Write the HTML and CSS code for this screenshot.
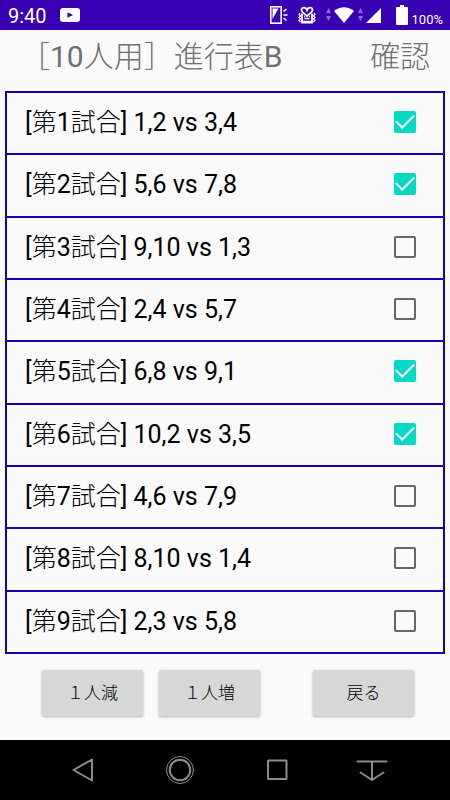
FILE: index.html
```html
<!DOCTYPE html>
<html lang="ja">
    <head>
        <meta charset="UTF-8" />
        <title>進行表B</title>
        <meta name="viewport" content="width=device-width, initial-scale=1.0" />
        <link rel="stylesheet" href="styles.css">
    </head>
    <body>
        <div class="status-bar">
            <span class="clock">9:40</span>
            <svg class="video-icon" width="20" height="14" viewBox="0 0 20 14">
                <rect width="20" height="14" rx="3" fill="#fff" />
                <path d="M7.5 4.2v5.6L13 7z" fill="#3700b3" />
            </svg>
            <div class="status-icons">
                <svg width="18" height="20" viewBox="0 0 18 20">
                    <rect x="0.8" y="1.8" width="10.4" height="16.4" fill="none" stroke="#fff" stroke-width="1.6" />
                    <path d="M2.5 3.500h6L2.500 14z" fill="#fff" />
                    <path d="M13.500 6.500l3-2.500M13.500 10h4M13.500 13l3 2.500" stroke="#fff" stroke-width="1.5" />
                </svg>
                <svg class="mascot" width="18" height="20" viewBox="0 0 18 20" fill="none" stroke="#fff">
                    <path d="M9 5C8 2 3.500 1.500 3.500 5c0 2.500 3 3.500 5.500 6 2.500-2.500 5.500-3.500 5.500-6C14.500 1.500 10 2 9 5z" stroke-width="1.8" />
                    <path d="M4 8.500V17.500h10V8.500" stroke-width="1.8" />
                    <path d="M5 16.500h8M6.500 13.500h5M6 11.500h1M11 11.500h1" stroke-width="1.3" />
                    <path d="M2 8l-1 1.500L2.500 11 1 12.500 2.500 14 1 15.500 2.500 17M16 8l1 1.500-1.500 1.500 1.500 1.500-1.500 1.500 1.500 1.500-1.500 1.500" stroke-width="1.2" />
                </svg>
                <svg width="5" height="14" viewBox="0 0 5 14" fill="#8c6bd4">
                    <path d="M2.500 0 5 5H0zM2.500 13 5 8H0z" />
                </svg>
                <svg class="wifi" width="20" height="16" viewBox="0 0 20 16">
                    <path d="M0 4Q10-3.500 20 4L10 16z" fill="#fff" />
                </svg>
                <svg width="5" height="14" viewBox="0 0 5 14" fill="#8c6bd4">
                    <path d="M2.500 0 5 5H0zM2.500 13 5 8H0z" />
                </svg>
                <svg class="signal" width="15" height="15" viewBox="0 0 15 15">
                    <path d="M15 0v15H0z" fill="#fff" />
                </svg>
                <svg class="battery" width="12" height="20" viewBox="0 0 12 20">
                    <path d="M4 0h4v2h3q1 0 1 1v16q0 1-1 1H1q-1 0-1-1V3q0-1 1-1h3z" fill="#fff" />
                </svg>
                <span class="battery-level">100%</span>
            </div>
        </div>

        <header class="header">
            <h1>［10人用］進行表B</h1>
            <span>確認</span>
        </header>

        <ul class="matches">
            <li><label for="match-1">[第1試合] 1,2 vs 3,4</label><input type="checkbox" id="match-1" checked /></li>
            <li><label for="match-2">[第2試合] 5,6 vs 7,8</label><input type="checkbox" id="match-2" checked /></li>
            <li><label for="match-3">[第3試合] 9,10 vs 1,3</label><input type="checkbox" id="match-3" /></li>
            <li><label for="match-4">[第4試合] 2,4 vs 5,7</label><input type="checkbox" id="match-4" /></li>
            <li><label for="match-5">[第5試合] 6,8 vs 9,1</label><input type="checkbox" id="match-5" checked /></li>
            <li><label for="match-6">[第6試合] 10,2 vs 3,5</label><input type="checkbox" id="match-6" checked /></li>
            <li><label for="match-7">[第7試合] 4,6 vs 7,9</label><input type="checkbox" id="match-7" /></li>
            <li><label for="match-8">[第8試合] 8,10 vs 1,4</label><input type="checkbox" id="match-8" /></li>
            <li><label for="match-9">[第9試合] 2,3 vs 5,8</label><input type="checkbox" id="match-9" /></li>
        </ul>

        <div class="actions">
            <button class="btn" type="button">１人減</button>
            <button class="btn" type="button">１人増</button>
            <button class="btn btn-back" type="button">戻る</button>
        </div>

        <nav class="nav-bar">
            <button type="button" aria-label="戻る">
                <svg width="32" height="32" viewBox="0 0 32 32">
                    <path d="M25 5.500v21L6.500 16z" />
                </svg>
            </button>
            <button type="button" aria-label="ホーム">
                <svg width="32" height="32" viewBox="0 0 32 32">
                    <circle cx="17" cy="16" r="10.200" />
                    <circle cx="17" cy="16" r="13.500" stroke-width="1" />
                </svg>
            </button>
            <button type="button" aria-label="履歴">
                <svg width="32" height="32" viewBox="0 0 32 32">
                    <rect x="8" y="6.500" width="18.500" height="18.500" rx="0.500" />
                </svg>
            </button>
            <button type="button" aria-label="隠す">
                <svg width="32" height="32" viewBox="0 0 32 32">
                    <path d="M1.500 7.500h29M16 7.500V26M4.500 18.500l11.500 7.500 11.500-7.500" />
                </svg>
            </button>
        </nav>
    </body>
</html>
```

FILE: styles.css
```css
* {
    margin: 0;
    padding: 0;
    box-sizing: border-box;
}

body {
    font-family: Roboto, "Noto Sans CJK JP Light", "Noto Sans CJK JP", sans-serif;
    background: #fafafa;
    color: #000;
    min-height: 100vh;
    display: flex;
    flex-direction: column;
}

button,
input {
    font: inherit;
    color: inherit;
}

.status-bar {
    display: flex;
    align-items: center;
    height: 30px;
    padding: 0 7px 0 8px;
    background: #3700b3;
    color: #fff;
}

.clock {
    padding-top: 2px;
    font-size: 20px;
}

.video-icon {
    margin-left: 13px;
}

.status-icons {
    display: flex;
    align-items: center;
    margin-left: auto;
}

.mascot {
    margin: 0 10px;
}

.wifi {
    margin: 0 4px 0 3px;
}

.signal {
    margin: 0 15px 0 3px;
}

.battery-level {
    margin-left: 4px;
    padding-top: 8px;
    font-size: 13px;
}

.header {
    display: flex;
    justify-content: space-between;
    align-items: center;
    padding: 5px 20px 12px;
    color: #707070;
    font-size: 30px;
    line-height: 44px;
}

.header h1 {
    font-size: inherit;
    font-weight: inherit;
}

.matches {
    flex: 1;
    display: flex;
    flex-direction: column;
    margin: 0 5px;
    border: 2px solid #1400aa;
    list-style: none;
}

.matches li {
    flex: 1;
    display: flex;
    align-items: center;
    padding: 0 27px 0 18px;
}

.matches li + li {
    border-top: 2px solid #1400aa;
}

.matches label {
    flex: 1;
    font-size: 25px;
    line-height: 36px;
}

.matches input {
    appearance: none;
    width: 22px;
    height: 22px;
    margin-bottom: 2px;
    border: 2px solid #666;
    border-radius: 2px;
}

.matches input:checked {
    display: flex;
    align-items: center;
    justify-content: center;
    border-color: #03dac5;
    background: #03dac5;
}

/* tick mark */
.matches input:checked::before {
    content: "";
    flex: none;
    width: 16px;
    height: 8px;
    margin-bottom: 6px;
    border: solid #fff;
    border-width: 0 0 2px 2px;
    transform: rotate(-45deg);
}

.actions {
    display: flex;
    gap: 16px;
    padding: 16px 36px 24px 42px;
}

.btn {
    width: 101px;
    height: 46px;
    padding-bottom: 3px;
    border: none;
    border-radius: 2px;
    background: #d6d7d7;
    box-shadow: 0 1px 3px rgba(0, 0, 0, 0.3);
    font-size: 17px;
    cursor: pointer;
}

.btn-back {
    margin-left: auto;
}

.nav-bar {
    display: flex;
    justify-content: space-between;
    align-items: center;
    height: 60px;
    padding: 0 62px 0 67px;
    background: #000;
}

.nav-bar button {
    height: 32px;
    border: none;
    background: none;
    cursor: pointer;
}

.nav-bar svg {
    display: block;
    fill: none;
    stroke: #8c8c8c;
    stroke-width: 2;
    stroke-linejoin: round;
    stroke-linecap: round;
}
```
